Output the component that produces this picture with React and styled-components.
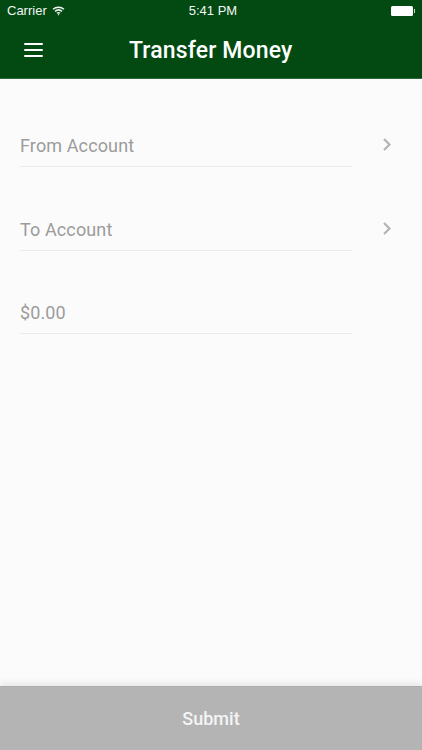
import React from 'react'
import styled, { createGlobalStyle } from 'styled-components'

const Global = createGlobalStyle`
  html, body { margin: 0; padding: 0; }
  body { font-family: Roboto, "Liberation Sans", sans-serif; background: #fbfbfb; }
  * { box-sizing: border-box; }
`
const Screen = styled.div`
  width: 422px;
  height: 750px;
  display: flex;
  flex-direction: column;
  background: #fbfbfb;
  overflow: hidden;
`
const Header = styled.header`
  height: 79px;
  flex: none;
  background: #034a12;
  border-bottom: 1px solid #2c6a3a;
  color: #fff;
`
const StatusBar = styled.div`
  height: 21px;
  display: grid;
  grid-template-columns: 1fr auto 1fr;
  align-items: center;
  padding: 0 7px;
  font-family: "Liberation Sans", Arial, sans-serif;
  font-size: 13px;
  color: #f2f6f2;
`
const Carrier = styled.div`
  display: flex;
  align-items: center;
  gap: 5px;
`
const Clock = styled.div`
  margin-left: 4px;
`
const Battery = styled.div`
  justify-self: end;
  margin-right: 2px;
  width: 22px;
  height: 10px;
  background: #fff;
  border-radius: 1.5px;
  position: relative;
  &::after {
    content: '';
    position: absolute;
    right: -2px;
    top: 3px;
    width: 1px;
    height: 4px;
    background: #cfdccf;
  }
`
const NavBar = styled.div`
  height: 58px;
  display: flex;
  align-items: center;
  padding-left: 24px;
  position: relative;
`
const Menu = styled.button`
  width: 19px;
  height: 14px;
  padding: 0;
  border: none;
  background: none;
  display: flex;
  flex-direction: column;
  justify-content: space-between;
  margin-top: -1px;
  span {
    display: block;
    height: 2px;
    background: #fff;
    border-radius: 1px;
  }
`
const Title = styled.h1`
  flex: 1;
  margin: 0 0 0 86px;
  font-size: 23px;
  line-height: 1;
  font-weight: 500;
  letter-spacing: 0.15px;
`
const Form = styled.main`
  flex: 1;
  padding: 42px 0 0 20px;
  display: flex;
  flex-direction: column;
  gap: 37.5px;
`
const Row = styled.div`
  display: flex;
  align-items: flex-start;
`
const Field = styled.div`
  width: 332px;
  height: 46px;
  padding-top: 14px;
  border-bottom: 1px solid #ebebeb;
  font-size: 18px;
  line-height: 21px;
  letter-spacing: 0.12px;
  color: #9c9c9c;
`
const Chevron = styled.svg`
  margin: 16px 0 0 30px;
  width: 10px;
  height: 15px;
  fill: none;
  stroke: #b4b4b4;
  stroke-width: 2.2;
`
const Submit = styled.button`
  height: 64px;
  flex: none;
  border: none;
  border-top: 1px solid #adadad;
  background: #b4b4b4;
  color: #f4f4f4;
  font-family: inherit;
  font-size: 18px;
  font-weight: 500;
  box-shadow: 0 -4px 6px rgba(0, 0, 0, 0.07);
`

const Wifi = () => (
  <svg width="13" height="10" viewBox="0 0 14 11" fill="none" stroke="#f2f6f2" strokeWidth="1.6">
    <path d="M1 3.6C4.4.6 9.6.6 13 3.6" />
    <path d="M3.2 5.9c2.2-1.9 5.4-1.9 7.6 0" />
    <path d="M5.3 8c1-.8 2.4-.8 3.4 0" />
    <circle cx="7" cy="9.6" r=".7" fill="#f2f6f2" stroke="none" />
  </svg>
)

const Arrow = () => (
  <Chevron viewBox="0 0 10 15">
    <path d="M2 2l5.5 5.5L2 13" />
  </Chevron>
)

const App = () => {
  return (
    <Screen>
      <Global />
      <Header>
        <StatusBar>
          <Carrier>Carrier <Wifi /></Carrier>
          <Clock>5:41 PM</Clock>
          <Battery />
        </StatusBar>
        <NavBar>
          <Menu aria-label="Menu"><span /><span /><span /></Menu>
          <Title>Transfer Money</Title>
        </NavBar>
      </Header>
      <Form>
        <Row>
          <Field>From Account</Field>
          <Arrow />
        </Row>
        <Row>
          <Field>To Account</Field>
          <Arrow />
        </Row>
        <Row>
          <Field>$0.00</Field>
        </Row>
      </Form>
      <Submit>Submit</Submit>
    </Screen>
  )
}

export default App
